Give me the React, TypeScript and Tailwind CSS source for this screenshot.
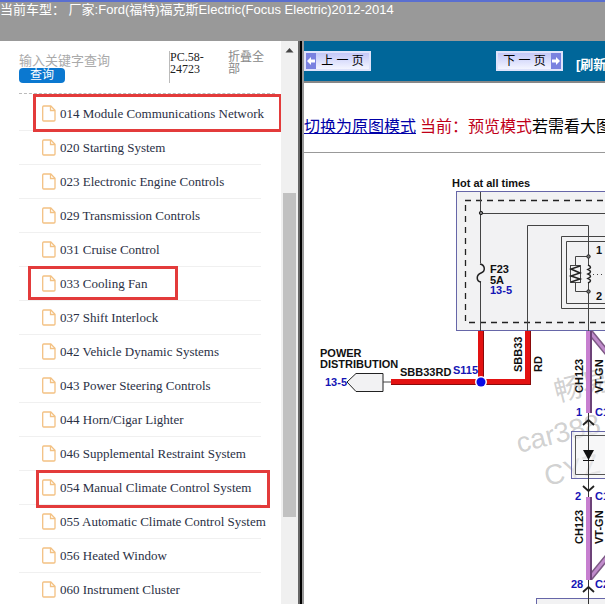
import { ReactNode } from 'react'

interface Entry {
  code: string
  name: string
}

const entries: Entry[] = [
  { code: '014', name: 'Module Communications Network' },
  { code: '020', name: 'Starting System' },
  { code: '023', name: 'Electronic Engine Controls' },
  { code: '029', name: 'Transmission Controls' },
  { code: '031', name: 'Cruise Control' },
  { code: '033', name: 'Cooling Fan' },
  { code: '037', name: 'Shift Interlock' },
  { code: '042', name: 'Vehicle Dynamic Systems' },
  { code: '043', name: 'Power Steering Controls' },
  { code: '044', name: 'Horn/Cigar Lighter' },
  { code: '046', name: 'Supplemental Restraint System' },
  { code: '054', name: 'Manual Climate Control System' },
  { code: '055', name: 'Automatic Climate Control System' },
  { code: '056', name: 'Heated Window' },
  { code: '060', name: 'Instrument Cluster' },
]

// red frames drawn over the highlighted entries
const marks: Record<string, string> = {
  '014': 'left-[14px] w-[249px] -top-[3px] h-[38px]',
  '033': 'left-[9px] w-[150px] -top-px h-[34px]',
  '054': 'left-[17px] w-[234px] -top-px h-[38px]',
}

const FileIcon = () => (
  <svg width="14" height="17" viewBox="0 0 14 17" fill="none" stroke="#f3c183" strokeWidth="1.3" className="shrink-0">
    <path d="M1.7 1H8.8L13 5.2V15Q13 16 12 16H1.7Q.7 16 .7 15V2Q.7 1 1.7 1Z" />
    <path d="M8.5 1V5.5H13" />
  </svg>
)

const Sidebar = () => (
  <aside className="flex w-[304px] shrink-0 bg-white">
    <div className="min-w-0 flex-1 overflow-hidden pl-[19px]">
      <div className="mr-[6px] flex h-[53px] border-b border-dashed border-[#bbb]">
        <form className="w-[150px] shrink-0 pt-3 font-['Liberation_Sans','Noto_Sans_CJK_SC',sans-serif]">
          <input
            aria-label="输入关键字查询"
            placeholder="输入关键字查询"
            className="block h-[15px] w-full text-[13px] leading-[15px] outline-none placeholder:text-[#aaa]"
          />
          <button
            type="button"
            className="block h-[15px] w-[46px] rounded bg-[#0b78d0] text-[12px] leading-[15px] text-white"
          >
            查询
          </button>
        </form>
        <div className="my-[10px] w-[59px] shrink-0 border-l border-[#bbb] text-[12px] leading-3 text-[#222]">
          PC.58-
          <br />
          24723
        </div>
        <a href="#" className="w-9 pt-[10px] text-[12px] leading-3 text-[#888]">
          折叠全部
        </a>
      </div>
      <ul className="mt-[3px]">
        {entries.map((e) => (
          <li key={e.code} className="relative mr-5 h-[34px] border-b border-[#f0f0f0]">
            <a
              href="#"
              className="flex h-full items-center gap-1 pl-[23px] text-[13px] whitespace-nowrap text-[#2a3045]"
            >
              <FileIcon />
              {e.code} {e.name}
            </a>
            {marks[e.code] && (
              <span className={`pointer-events-none absolute z-10 border-3 border-[#e33b3b] ${marks[e.code]}`} />
            )}
          </li>
        ))}
      </ul>
    </div>
    <div className="w-[17px] shrink-0 bg-[#f0f0f0] px-[2px]">
      <svg viewBox="0 0 13 17" className="block w-full">
        <path d="M2.5 11.500L6.500 7L10.500 11.500Z" fill="#444" />
      </svg>
      <div className="mt-[135px] h-[324px] bg-[#c1c1c1]" />
    </div>
    <div className="w-[6px] shrink-0 border-r-2 border-l-2 border-r-[#999] border-l-[#666] bg-black" />
  </aside>
)

const Arrow = ({ back }: { back?: boolean }) => (
  <svg width="10" height="16" viewBox="0 0 10 16" className="shrink-0 bg-[#7a82e0]">
    <path d={back ? 'M1 8L5 4V6.500H9V9.500H5V12Z' : 'M9 8L5 4V6.500H1V9.500H5V12Z'} fill="#fff" />
  </svg>
)

const PageButton = ({ children }: { children: ReactNode }) => (
  <button className="flex h-5 w-[67px] shrink-0 items-center justify-between border-2 border-[#dfe3fb] bg-gradient-to-b from-[#c3c8f8] to-[#f4f5ff] text-[12px] leading-4 text-black">
    {children}
  </button>
)

interface LabelProps {
  x: number
  y: number
  blue?: boolean
  children: ReactNode
}

const Label = ({ x, y, blue, children }: LabelProps) => (
  <text x={x} y={y} fontSize="11" fontWeight="bold" fill={blue ? '#1515b5' : '#111'}>
    {children}
  </text>
)

const VLabel = ({ x, y, children }: LabelProps) => (
  <text transform={`translate(${x} ${y}) rotate(-90)`} fontSize="11" fontWeight="bold" fill="#111">
    {children}
  </text>
)

const Diagram = () => (
  <svg
    width="301"
    height="451"
    viewBox="304 153 301 451"
    className="block shrink-0 font-['Liberation_Sans','Noto_Sans_CJK_SC',sans-serif]"
    fill="none"
  >
    {/* fuse box */}
    <rect x="456.5" y="191.5" width="200" height="139" fill="#f2f2f3" stroke="#6666a8" />
    <path d="M465.5 205V322.5H606" stroke="#222" strokeWidth="1.3" strokeDasharray="6 5" />
    <path d="M465 200.5H606" stroke="#222" strokeWidth="1.3" strokeDasharray="6 5" />
    <g stroke="#444">
      <path d="M480.5 192V263M480.5 282V331M480.5 213.5H606" />
      <path d="M527.5 331V225.5H588.5V265M588.5 283V331" />
      <path d="M606 236.5H561.5V308.5H606M606 241.5H566.5V303.5H606" />
      <path d="M588 256.5H575.5V265M575.5 283V291.5H588" />
      <rect x="570.5" y="265.5" width="10" height="17" />
      <path d="M580 266L571 269L580 273L571 276L580 279L571 282" strokeWidth="1.5" stroke="#222" />
      <path d="M593 274.5H606" strokeDasharray="1 3" />
    </g>
    <path d="M588 265q5 2.200 0 4.500q5 2.200 0 4.500q5 2.200 0 4.500q5 2.200 0 4.500" stroke="#222" strokeWidth="1.5" />
    <path d="M480 264C485 265 486 271 481 273C476 275 476 281 481 282" stroke="#222" strokeWidth="1.5" />
    <g stroke="#222" fill="#777">
      <circle cx="481" cy="213" r="1.7" />
      <circle cx="588.5" cy="256.5" r="1.7" />
      <circle cx="588.5" cy="291.5" r="1.7" />
    </g>
    <Label x={452} y={187}>Hot at all times</Label>
    <Label x={490} y={273}>F23</Label>
    <Label x={490} y={284}>5A</Label>
    <Label x={490} y={294} blue>13-5</Label>
    <Label x={596} y={254}>1</Label>
    <Label x={596} y={300}>2</Label>

    {/* red feed */}
    <path d="M481 331V382M391 382H528V331" stroke="#8a0a0a" strokeWidth="6" />
    <path d="M480.5 331V382M391 381.5H527.5V331" stroke="#e31212" strokeWidth="5" />
    <circle cx="481" cy="382" r="6" fill="#fff" />
    <circle cx="481" cy="382" r="4.5" fill="#0a0ae6" />
    <path d="M347 382L356 373.5H383V391.5H356Z" fill="#f2f2f3" stroke="#222" />
    <path d="M383 382H391" stroke="#444" />
    <Label x={320} y={357}>POWER</Label>
    <Label x={320} y={368}>DISTRIBUTION</Label>
    <Label x={325} y={386} blue>13-5</Label>
    <Label x={400} y={376}>SBB33RD</Label>
    <Label x={453} y={374} blue>S115</Label>
    <VLabel x={522} y={372}>SBB33</VLabel>
    <VLabel x={542} y={372}>RD</VLabel>

    {/* watermark */}
    <g fill="#888" fillOpacity="0.4" fontSize="28">
      <text transform="translate(557 402) rotate(-14)">畅易</text>
      <text transform="translate(519 453) rotate(-14)">car388</text>
      <text transform="translate(547 486) rotate(-14)">CYZ</text>
    </g>

    {/* violet branch */}
    <path d="M590 332L608 354M590 578L608 556" stroke="#7d5a85" strokeWidth="6" />
    <path d="M590 332L608 354M590 578L608 556" stroke="#c08bcb" strokeWidth="3" />
    <path d="M589 331V413M589 497V580" stroke="#6d4378" strokeWidth="6" />
    <path d="M588 331V413M588 497V580" stroke="#c77fd0" strokeWidth="4" />
    <rect x="571.5" y="431.5" width="60" height="47" fill="#f2f2f3" fillOpacity="0.6" stroke="#6666a8" />
    <path d="M606 435.5H575.5V474.5H606" stroke="#555" />
    <rect x="536.5" y="598.5" width="90" height="20" fill="#f2f2f3" stroke="#6666a8" />
    <path d="M588.5 413V497M588.5 580V604" stroke="#333" />
    <path
      d="M583 425L588.5 420L594 425M583 486L588.5 491L594 486M583 592L588.5 587L594 592"
      stroke="#222"
      strokeWidth="1.8"
    />
    <path d="M583 450H594L588.5 460Z" fill="#111" />
    <path d="M583 460.5H594" stroke="#111" />
    <VLabel x={583} y={393}>CH123</VLabel>
    <VLabel x={603} y={393}>VT-GN</VLabel>
    <VLabel x={583} y={544}>CH123</VLabel>
    <VLabel x={603} y={544}>VT-GN</VLabel>
    <Label x={576} y={416} blue>1</Label>
    <Label x={595} y={416} blue>C1</Label>
    <Label x={575} y={500} blue>2</Label>
    <Label x={595} y={500} blue>C1</Label>
    <Label x={571} y={588} blue>28</Label>
    <Label x={595} y={588} blue>C2</Label>
  </svg>
)

const App = () => (
  <div className="flex h-screen flex-col overflow-hidden bg-white font-['Liberation_Serif','Noto_Sans_CJK_SC',serif]">
    <header className="h-[41px] shrink-0 border-t-2 border-[#5a6fd0] bg-[#999] font-['Liberation_Sans','Noto_Sans_CJK_SC',sans-serif] text-[13px] leading-4 whitespace-nowrap text-white">
      当前车型： 厂家:Ford(福特)福克斯Electric(Focus Electric)2012-2014
    </header>
    <div className="flex min-h-0 flex-1">
      <Sidebar />
      <main className="flex min-w-0 flex-1 flex-col overflow-hidden whitespace-nowrap">
        <nav className="flex h-[42px] shrink-0 items-center border-b-2 border-[#888] bg-[#006699] font-['Liberation_Sans','Noto_Sans_CJK_SC',sans-serif]">
          <PageButton>
            <Arrow back />
            <span className="flex-1">上 一 页</span>
          </PageButton>
          <span className="w-[125px] shrink-0" />
          <PageButton>
            <span className="flex-1">下 一 页</span>
            <Arrow />
          </PageButton>
          <a href="#" className="mt-2 ml-[13px] text-[13px] font-bold text-white">
            [刷新]
          </a>
        </nav>
        <p className="h-[70px] shrink-0 border-b border-[#999] pt-8 text-[16px] leading-6 text-black">
          <a href="#" className="text-[#0000a8] underline">
            切换为原图模式
          </a>{' '}
          <span className="text-[#c00018]">当前：预览模式</span>若需看大图请切换
        </p>
        <Diagram />
      </main>
    </div>
  </div>
)

export default App
